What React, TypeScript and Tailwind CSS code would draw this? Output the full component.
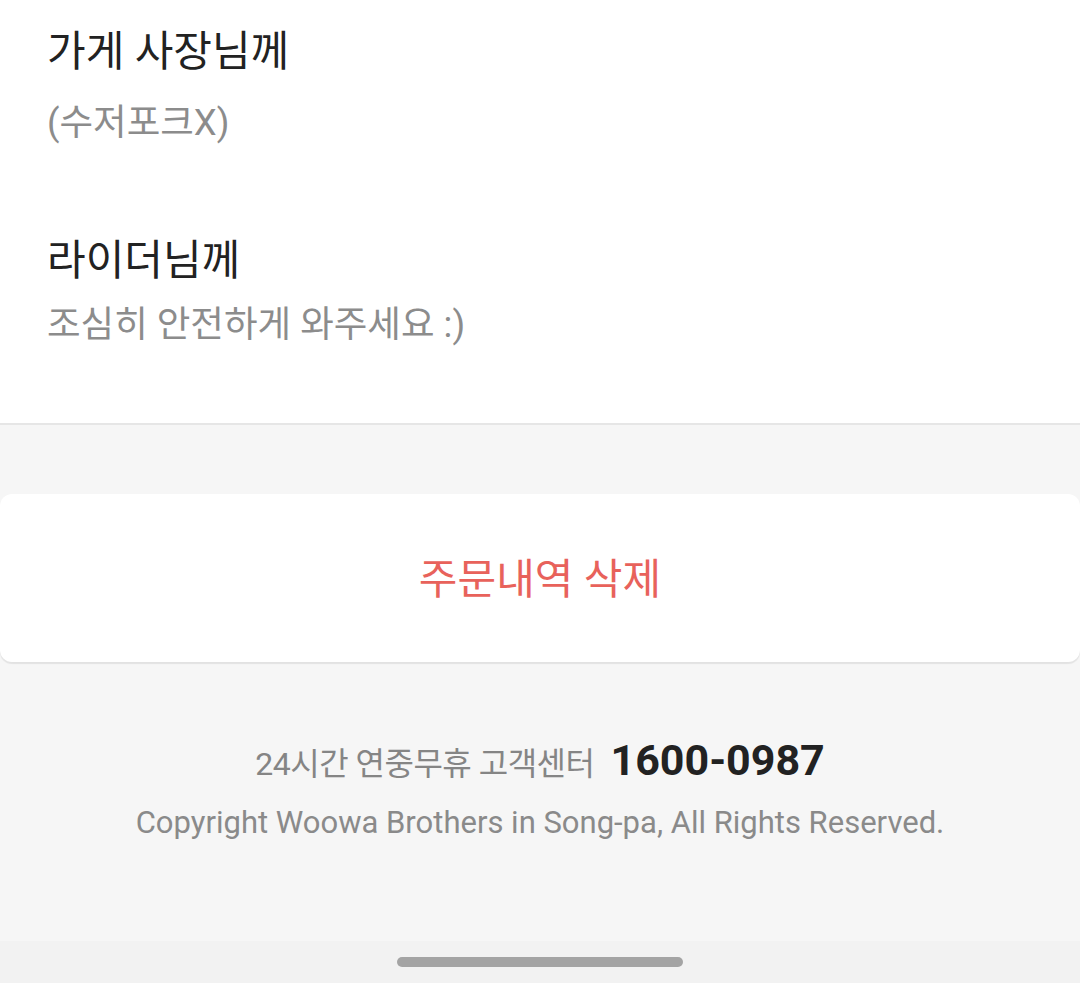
export default function App() {
  const font = { fontFamily: 'Roboto, "Noto Sans CJK KR", sans-serif' };
  return (
    <div className="w-[1080px] h-[983px] bg-[#f6f6f6] flex flex-col overflow-hidden" style={font}>
      <div className="bg-white border-b-2 border-[#e6e6e6] px-[47px] pt-[26px] pb-[73px] flex flex-col">
        <div className="h-[52px] flex items-center text-[42px] text-[#222222] leading-none">가게 사장님께</div>
        <div className="h-[50px] mt-[20px] flex items-center text-[36.5px] text-[#8c8c8c] leading-none">(수저포크X)</div>
        <div className="h-[52px] mt-[87px] flex items-center text-[42px] text-[#222222] leading-none">라이더님께</div>
        <div className="h-[50px] mt-[13px] flex items-center text-[36.5px] text-[#8c8c8c] leading-none">조심히 안전하게 와주세요 :)</div>
      </div>
      <div className="mt-[69px] bg-white rounded-[12px] h-[168px] flex items-center justify-center shadow-[0_2px_1px_rgba(0,0,0,0.08)]">
        <span className="text-[42px] text-[#e8625b] leading-none mt-[4px]">주문내역 삭제</span>
      </div>
      <div className="flex-1 flex flex-col items-center pt-[77px]">
        <div className="flex items-baseline h-[44px]">
          <span className="text-[32px] text-[#858585] tracking-[-0.5px]">24시간 연중무휴 고객센터</span>
          <span className="ml-[16px] text-[43px] font-bold text-[#222222] leading-none">1600-0987</span>
        </div>
        <div className="mt-[24px] text-[31px] text-[#8a8a8a] leading-none">Copyright Woowa Brothers in Song-pa, All Rights Reserved.</div>
      </div>
      <div className="h-[42px] bg-[#f2f2f2] flex items-center justify-center">
        <div className="w-[286px] h-[10px] rounded-full bg-[#a4a4a4]" />
      </div>
    </div>
  );
}
